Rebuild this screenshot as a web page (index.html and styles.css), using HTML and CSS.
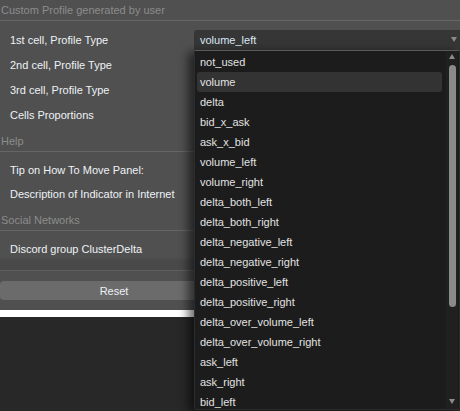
FILE: index.html
```html
<!DOCTYPE html>
<html>
<head>
  <title>Profile Settings</title>
  <link rel="stylesheet" href="styles.css">
</head>
<body>
  <div class="panel">
    <div class="section">
      <div class="section-title">Custom Profile generated by user</div>
      <div class="section-body">
        <div class="row">
          <span class="row-label">1st cell, Profile Type</span>
          <div class="select">
            <span class="select-value">volume_left</span>
            <span class="select-arrow"></span>
            <div class="dropdown">
              <ul class="dropdown-list">
                <li>not_used</li>
                <li class="active">volume</li>
                <li>delta</li>
                <li>bid_x_ask</li>
                <li>ask_x_bid</li>
                <li>volume_left</li>
                <li>volume_right</li>
                <li>delta_both_left</li>
                <li>delta_both_right</li>
                <li>delta_negative_left</li>
                <li>delta_negative_right</li>
                <li>delta_positive_left</li>
                <li>delta_positive_right</li>
                <li>delta_over_volume_left</li>
                <li>delta_over_volume_right</li>
                <li>ask_left</li>
                <li>ask_right</li>
                <li>bid_left</li>
              </ul>
              <div class="scrollbar">
                <span class="scroll-up"></span>
                <span class="scroll-thumb"></span>
                <span class="scroll-track"></span>
                <span class="scroll-down"></span>
              </div>
            </div>
          </div>
        </div>
        <div class="row">
          <span class="row-label">2nd cell, Profile Type</span>
          <div class="select"></div>
        </div>
        <div class="row">
          <span class="row-label">3rd cell, Profile Type</span>
          <div class="select"></div>
        </div>
        <div class="row">
          <span class="row-label">Cells Proportions</span>
          <div class="select"></div>
        </div>
      </div>
    </div>

    <div class="section">
      <div class="section-title">Help</div>
      <div class="section-body">
        <div class="row row-link"><span class="row-label">Tip on How To Move Panel:</span></div>
        <div class="row row-link"><span class="row-label">Description of Indicator in Internet</span></div>
      </div>
    </div>

    <div class="section">
      <div class="section-title">Social Networks</div>
      <div class="section-body last">
        <div class="row row-link"><span class="row-label">Discord group ClusterDelta</span></div>
      </div>
    </div>

    <div class="divider"></div>

    <div class="footer">
      <button class="btn">Reset</button>
      <button class="btn"></button>
    </div>
    <div class="white-bar"></div>
  </div>
  <div class="backdrop"></div>
</body>
</html>
```

FILE: styles.css
```css
html,
body {
  height: 100%;
}

body {
  display: flex;
  flex-direction: column;
  margin: 0;
  padding: 0;
  background-color: #282828;
  font-family: "Liberation Sans", Arial, sans-serif;
  font-size: 11px;
}

.panel {
  position: relative;
  z-index: 1;
  width: 460px;
  background-color: #505050;
}

.backdrop {
  flex: 1;
  background-color: #282828;
}

.section-title {
  height: 20px;
  line-height: 20px;
  padding-left: 1px;
  color: #8c8c8c;
  border-bottom: 1px solid #666;
}

.section-body {
  padding: 6px 0 4px;
}

.section-body.last {
  padding-bottom: 0;
  background: linear-gradient(to bottom, #505050 85%, #4a4a4a);
}

.row {
  display: flex;
  align-items: center;
  justify-content: space-between;
  height: 25px;
}

.row-link {
  height: 24px;
}

.row-label {
  padding-left: 10px;
  color: #eef2f6;
}

.select {
  position: relative;
  display: flex;
  align-items: center;
  justify-content: space-between;
  width: 266px;
  height: 20px;
  box-sizing: border-box;
  padding: 0 3px 0 6px;
  background-color: #363636;
  border-radius: 3px 0 0 0;
  color: #dce8f4;
}

.select-arrow {
  width: 0;
  height: 0;
  border-left: 3px solid transparent;
  border-right: 3px solid transparent;
  border-top: 5px solid #8a8a8a;
}

/* open popup of the first select */
.dropdown {
  position: absolute;
  top: 20px;
  left: 0;
  z-index: 10;
  display: flex;
  width: 266px;
  height: 360px;
  box-sizing: border-box;
  background-color: #1c1c1c;
  border: 1px solid #2c2c2c;
  border-top-color: #5a5a5a;
  border-radius: 0 0 3px 3px;
  box-shadow: -6px 2px 10px rgba(0, 0, 0, 0.55);
  overflow: hidden;
}

.dropdown-list {
  flex: 1;
  list-style: none;
  margin: 0;
  padding: 1px 4px 0 2px;
}

.dropdown-list li {
  height: 20px;
  line-height: 20px;
  padding-left: 3px;
  color: #e2e2e2;
  border-radius: 3px;
}

.dropdown-list li.active {
  background-color: #333;
}

.scrollbar {
  display: flex;
  flex-direction: column;
  align-items: center;
  width: 12px;
  margin-right: 1px;
  background-color: #202020;
}

.scroll-up,
.scroll-down {
  width: 0;
  height: 0;
  border-left: 3px solid transparent;
  border-right: 3px solid transparent;
}

.scroll-up {
  margin-top: 3px;
  border-bottom: 5px solid #8a8a8a;
}

.scroll-down {
  margin-bottom: 5px;
  border-top: 5px solid #8a8a8a;
}

.scroll-thumb {
  width: 7px;
  height: 242px;
  margin-top: 6px;
  background-color: #8a8a8a;
  border-radius: 4px;
}

.scroll-track {
  flex: 1;
}

.divider {
  height: 9px;
  background-color: #494949;
  border-bottom: 1px solid #5f5f5f;
}

.footer {
  display: flex;
  gap: 4px;
  padding: 10px 0;
}

.btn {
  flex: 1;
  height: 19px;
  padding: 0;
  border: none;
  border-radius: 4px;
  background-color: #6b6b6b;
  color: #eef2f6;
  font-family: "Liberation Sans", Arial, sans-serif;
  font-size: 11px;
}

.white-bar {
  height: 7px;
  background-color: #fff;
}
```
